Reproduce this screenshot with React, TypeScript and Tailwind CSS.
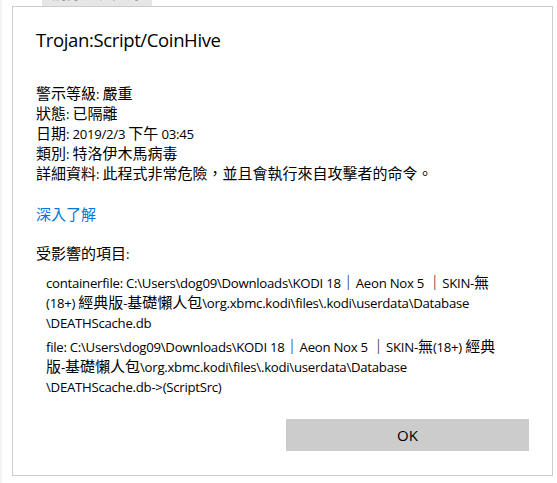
import React from "react";

const font = {
  fontFamily: "'Segoe UI', 'Open Sans', 'Noto Sans CJK TC', sans-serif",
};

const CJK = /([\u2E80-\u9FFF\u3000-\u303F\uFF00-\uFFEF]+)/;

function M({ t }: { t: string }) {
  const parts = t.split(CJK).filter((p) => p.length > 0);
  return (
    <>
      {parts.map((p, i) =>
        CJK.test(p) ? (
          <span key={i} className="leading-none">{p}</span>
        ) : (
          <span key={i} className="text-[13.2px] tracking-[-0.02em] leading-none">
            {p}
          </span>
        )
      )}
    </>
  );
}

function Line({ t }: { t: string }) {
  return (
    <div className="h-[20px] leading-[20px]">
      <M t={t} />
    </div>
  );
}

export default function App() {
  return (
    <div
      className="w-[557px] h-[483px] bg-white border-l-2 border-[#f3f3f3] overflow-hidden text-[#000]"
      style={font}
    >
      <div className="h-[6px] overflow-hidden pl-[40px]">
        <div className="w-[110px] h-[32px] -mt-[20px] bg-[#e6e6e6] text-[15px] leading-[26px] text-[#9a9a9a] text-center">
          清除歷程記錄
        </div>
      </div>
      <div className="ml-[10px] w-[541px] h-[470px] border border-[#cccccc] bg-white flex flex-col pl-[23px] pr-[23px]">
        <div className="mt-[19px] text-[18.5px] tracking-[-0.02em] leading-[28px] text-[#000]">
          Trojan:Script/CoinHive
        </div>
        <div className="mt-[29px] text-[15px]">
          <Line t="警示等級: 嚴重" />
          <Line t="狀態: 已隔離" />
          <Line t="日期: 2019/2/3 下午 03:45" />
          <Line t="類別: 特洛伊木馬病毒" />
          <Line t="詳細資料: 此程式非常危險，並且會執行來自攻擊者的命令。" />
        </div>
        <div className="mt-[21px] text-[15px] h-[20px] leading-[20px] text-[#0078d7]">深入了解</div>
        <div className="mt-[19px] text-[15px]">
          <Line t="受影響的項目:" />
        </div>
        <div className="mt-[9px] pl-[10px] text-[15px] whitespace-nowrap">
          <div>
            <Line t="containerfile: C:\Users\dog09\Downloads\KODI 18｜Aeon Nox 5 ｜SKIN-無" />
            <Line t="(18+) 經典版-基礎懶人包\org.xbmc.kodi\files\.kodi\userdata\Database" />
            <Line t="\DEATHScache.db" />
          </div>
          <div className="mt-[4px]">
            <Line t="file: C:\Users\dog09\Downloads\KODI 18｜Aeon Nox 5 ｜SKIN-無(18+) 經典" />
            <Line t="版-基礎懶人包\org.xbmc.kodi\files\.kodi\userdata\Database" />
            <Line t="\DEATHScache.db->(ScriptSrc)" />
          </div>
        </div>
        <div className="mt-[23px] flex justify-end">
          <button className="w-[243px] h-[32px] bg-[#cccccc] text-[15px] text-[#000]">
            OK
          </button>
        </div>
      </div>
    </div>
  );
}
